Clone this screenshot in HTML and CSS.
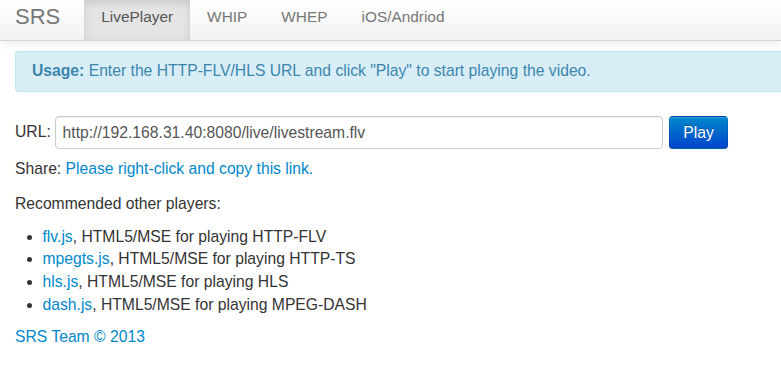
FILE: index.html
```html
<!DOCTYPE html>
<html>
<head>
<title>SRS</title>
<meta http-equiv="Content-Type" content="text/html; charset=utf-8" />
<link rel="stylesheet" href="styles.css">
</head>
<body>
	<div class="navbar">
		<div class="navbar-inner">
			<a class="brand" href="#">SRS</a>
			<ul class="nav">
				<li class="active"><a href="#">LivePlayer</a></li>
				<li><a href="#">WHIP</a></li>
				<li><a href="#">WHEP</a></li>
				<li><a href="#">iOS/Andriod</a></li>
			</ul>
		</div>
	</div>
	<div class="container">
		<div class="alert alert-info">
			<strong>Usage:</strong> Enter the HTTP-FLV/HLS URL and click "Play" to start playing the video.
		</div>
		<div class="form-inline">
			<span class="url-label">URL:</span>
			<input type="text" id="txt_url" class="input-xxlarge" value="http://192.168.31.40:8080/live/livestream.flv" />
			<button class="btn btn-primary" id="btn_play">Play</button>
		</div>
		<p class="share">Share: <a href="#" id="link_url">Please right-click and copy this link.</a></p>
		<p class="recommend">Recommended other players:</p>
		<ul class="players">
			<li><a href="#">flv.js</a>, HTML5/MSE for playing HTTP-FLV</li>
			<li><a href="#">mpegts.js</a>, HTML5/MSE for playing HTTP-TS</li>
			<li><a href="#">hls.js</a>, HTML5/MSE for playing HLS</li>
			<li><a href="#">dash.js</a>, HTML5/MSE for playing MPEG-DASH</li>
		</ul>
		<footer class="footer">
			<a href="#">SRS Team &copy; 2013</a>
		</footer>
	</div>
</body>
</html>
```

FILE: styles.css
```css
body {
	margin: 0;
	background: #fff;
	color: #333;
	font: 15.7px/22.8px "Liberation Sans", Arial, Helvetica, sans-serif;
}
a {
	color: #0088cc;
	text-decoration: none;
}
.navbar {
	box-shadow: 0 1px 10px rgba(0, 0, 0, 0.1);
	position: relative;
}
.navbar-inner {
	display: flex;
	height: 40px;
	background: linear-gradient(to bottom, #ffffff, #f2f2f2);
	border-bottom: 1px solid #d4d4d4;
}
.brand {
	color: #777;
	font-size: 22px;
	line-height: 33px;
	padding: 0 24px 0 15px;
}
.nav {
	display: flex;
	list-style: none;
	margin: 0;
	padding: 0;
	font-size: 15.4px;
}
.nav li a {
	display: block;
	height: 40px;
	padding: 0 17px;
	color: #777;
	line-height: 33px;
}
.nav li.active a {
	background: #e5e5e5;
	color: #555;
	box-shadow: inset 0 3px 8px rgba(0, 0, 0, 0.125);
}
.container {
	padding-left: 15px;
}
/* the box runs on past the right edge of the window */
.alert {
	margin: 10px 0 24px;
	padding: 8px 35px 9px 16px;
	line-height: 22px;
	border: 1px solid #bce8f1;
	border-right: 0;
	border-radius: 4px 0 0 4px;
	background: #d9edf7;
	color: #3a87ad;
}
.form-inline {
	display: flex;
	align-items: center;
	height: 33px;
	margin-bottom: 9px;
}
.url-label {
	width: 40px;
}
.form-inline input {
	box-sizing: border-box;
	width: 608px;
	height: 33px;
	margin: 0 6px 0 0;
	padding: 0 6.6px;
	border: 1px solid #ccc;
	border-radius: 4px;
	box-shadow: inset 0 1px 1px rgba(0, 0, 0, 0.075);
	color: #555;
	font: 15.7px "Liberation Sans", Arial, sans-serif;
}
.btn-primary {
	box-sizing: border-box;
	width: 59px;
	height: 33px;
	padding: 0;
	border: 1px solid #0044cc;
	border-color: rgba(0, 0, 0, 0.1) rgba(0, 0, 0, 0.1) rgba(0, 0, 0, 0.25);
	border-radius: 4px;
	background: linear-gradient(to bottom, #0088cc, #0044cc);
	color: #fff;
	font: 15.7px "Liberation Sans", Arial, sans-serif;
	text-shadow: 0 -1px 0 rgba(0, 0, 0, 0.25);
	box-shadow: inset 0 1px 0 rgba(255, 255, 255, 0.2), 0 1px 2px rgba(0, 0, 0, 0.05);
}
.share {
	margin: 0 0 12px;
}
.recommend {
	margin: 0 0 10px;
}
.players {
	margin: 0 0 9.5px;
	padding-left: 27.5px;
}
.footer {
	margin: 0;
}
```
